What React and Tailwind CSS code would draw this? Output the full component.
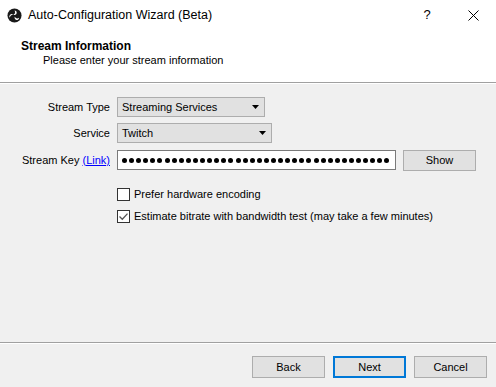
import React, { useState } from 'react';

const ObsIcon = () => (
    <svg width="15" height="15" viewBox="0 0 16 16">
        <circle cx="8" cy="8" r="7.5" fill="#1a1a1a" />
        {/* three swirl blobs */}
        <g fill="#ffffff">
            <path d="M8 2.6 a2.4 2.4 0 1 1 -1.2 4.5 a3.2 3.2 0 0 0 1.2 -4.5z" />
            <path d="M12.9 10.3 a2.4 2.4 0 1 1 -4.6 -0.9 a3.2 3.2 0 0 0 4.6 0.9z" />
            <path d="M3.1 10.5 a2.4 2.4 0 1 1 3.6 -3.2 a3.2 3.2 0 0 0 -3.6 3.2z" />
        </g>
    </svg>
);

const Combo = ({ value, width }) => (
    <div
        className="h-[20px] flex items-center justify-between bg-[#e1e1e1] border border-[#adadad] pl-[4px] pr-[5px]"
        style={{ width }}
    >
        <span className="text-[#000]">{value}</span>
        <svg width="7" height="4" viewBox="0 0 7 4">
            <path d="M0 0h7L3.5 4z" fill="#000" />
        </svg>
    </div>
);

const Checkbox = ({ checked, onChange, label }) => (
    <label className="h-[22px] flex items-center gap-[4px] cursor-default" onClick={onChange}>
        <span className="w-[13px] h-[13px] border border-[#333333] bg-white flex items-center justify-center">
            {checked && (
                <svg width="11" height="11" viewBox="0 0 11 11">
                    <path d="M1.5 5.5l2.8 2.8L9.5 2.6" fill="none" stroke="#555" strokeWidth="1.3" />
                </svg>
            )}
        </span>
        <span>{label}</span>
    </label>
);

const Btn = ({ children, primary }) => (
    <button
        className={
            primary
                ? "w-[73px] h-[22px] bg-[#e1e1e1] border-2 border-[#0078d7] text-black"
                : "w-[73px] h-[22px] bg-[#e1e1e1] border border-[#adadad] text-black"
        }
    >
        {children}
    </button>
);

export default function App() {
    const [hardware, setHardware] = useState(false);
    const [bandwidth, setBandwidth] = useState(true);
    const keyDots = Array.from({ length: 38 });

    return (
        <div className="w-[496px] h-[387px] flex flex-col bg-[#f0f0f0] text-[11px] text-black font-['Liberation_Sans',sans-serif] overflow-hidden">
            {/* header */}
            <div className="bg-white h-[83px] border-b border-[#a0a0a0] shrink-0">
                <div className="h-[30px] flex items-center pl-[7px]">
                    <ObsIcon />
                    <span className="ml-[6px] text-[12.5px] text-[#000]">Auto-Configuration Wizard (Beta)</span>
                    <span className="ml-auto w-[46px] text-center text-[13px]">?</span>
                    <span className="w-[46px] flex justify-center">
                        <svg width="11" height="11" viewBox="0 0 11 11">
                            <path d="M0.5 0.5l10 10M10.5 0.5l-10 10" stroke="#000" strokeWidth="1" />
                        </svg>
                    </span>
                </div>
                <div className="pl-[21px] pt-[9px] leading-[14px]">
                    <div className="font-bold text-[12px]">Stream Information</div>
                    <div className="pl-[22px]">Please enter your stream information</div>
                </div>
            </div>
            <div className="h-px bg-white shrink-0" />

            {/* body */}
            <div className="flex-1 pt-[13px]">
                <div className="flex items-center h-[20px]">
                    <div className="w-[110px] text-right">Stream Type</div>
                    <div className="ml-[7px]">
                        <Combo value="Streaming Services" width={148} />
                    </div>
                </div>
                <div className="flex items-center h-[20px] mt-[6px]">
                    <div className="w-[110px] text-right">Service</div>
                    <div className="ml-[7px]">
                        <Combo value="Twitch" width={155} />
                    </div>
                </div>
                <div className="flex items-center h-[20px] mt-[7px]">
                    <div className="w-[110px] text-right">
                        Stream Key <a className="text-[#0000ff] underline">(Link)</a>
                    </div>
                    <div className="ml-[7px] w-[279px] h-[20px] bg-white border border-[#7a7a7a] flex items-center pl-[4px] gap-[2.1px] overflow-hidden">
                        {keyDots.map((_, i) => (
                            <span key={i} className="w-[5px] h-[5px] rounded-full bg-black shrink-0" />
                        ))}
                    </div>
                    <button className="ml-[7px] w-[73px] h-[21px] bg-[#e1e1e1] border border-[#adadad]">Show</button>
                </div>

                <div className="pl-[117px] mt-[13px]">
                    <Checkbox
                        checked={hardware}
                        onChange={() => setHardware(!hardware)}
                        label="Prefer hardware encoding"
                    />
                    <Checkbox
                        checked={bandwidth}
                        onChange={() => setBandwidth(!bandwidth)}
                        label="Estimate bitrate with bandwidth test (may take a few minutes)"
                    />
                </div>
            </div>

            {/* footer */}
            <div className="h-px bg-[#a0a0a0] shrink-0" />
            <div className="h-px bg-white shrink-0" />
            <div className="h-[43px] shrink-0 flex justify-end items-start pt-[12px] pr-[9px] gap-[8px]">
                <Btn>Back</Btn>
                <Btn primary>Next</Btn>
                <Btn>Cancel</Btn>
            </div>
        </div>
    );
}
